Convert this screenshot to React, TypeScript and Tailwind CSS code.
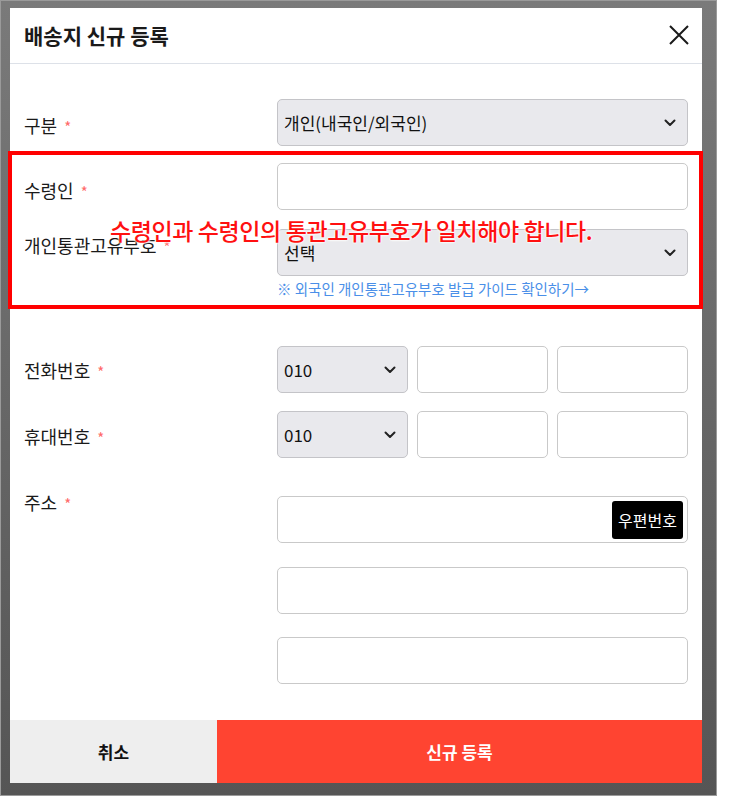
import React from "react";

const font = { fontFamily: '"Noto Sans CJK KR", "Noto Sans", sans-serif' };

function Star() {
  return <span className="ml-[7px] text-[15px] text-[#ff6a6a]">*</span>;
}

function Chevron() {
  return (
    <svg width="12" height="8" viewBox="0 0 12 8" className="shrink-0">
      <path d="M1.5 1.5 L6 6 L10.5 1.5" fill="none" stroke="#222" strokeWidth="2" strokeLinecap="round" strokeLinejoin="round" />
    </svg>
  );
}

function Select({ value, className = "" }: { value: string; className?: string }) {
  return (
    <div
      className={`flex h-[47px] items-center justify-between rounded-[5px] border border-[#c4c4c8] bg-[#e9e9ed] pl-[6px] pr-[11px] text-[17px] text-[#111] ${className}`}
    >
      <span>{value}</span>
      <Chevron />
    </div>
  );
}

function Input({ className = "", children }: { className?: string; children?: React.ReactNode }) {
  return (
    <div
      className={`flex h-[47px] items-center justify-end rounded-[5px] border border-[#c9c9c9] bg-white pr-[4px] ${className}`}
    >
      {children}
    </div>
  );
}

function Row({
  label,
  labelClass,
  mt,
  children,
}: {
  label: string;
  labelClass: string;
  mt: string;
  children: React.ReactNode;
}) {
  return (
    <div className={`flex items-start ${mt}`}>
      <div className={`w-[253px] text-[18px] leading-[24px] text-[#1a1a1a] ${labelClass}`}>
        {label}
        <Star />
      </div>
      <div className="w-[411px]">{children}</div>
    </div>
  );
}

export default function App() {
  return (
    <div className="min-h-[797px] w-[747px] bg-white" style={font}>
      <div className="h-[796px] w-[717px] border border-[#9a9a9a] bg-gradient-to-b from-[#7a7a7a] to-[#555] pb-[12px] pl-[9px] pr-[14px] pt-[7px]">
        <div className="relative flex h-[775px] w-[692px] flex-col bg-white">
          <div className="flex h-[56px] items-center justify-between border-b border-[#dde1e8] pl-[14px] pr-[12px]">
            <h2 className="text-[21px] font-semibold text-[#1a1a1a]">배송지 신규 등록</h2>
            <svg width="22" height="22" viewBox="0 0 22 22" className="mt-[-2px]">
              <path d="M2 2 L20 20 M20 2 L2 20" stroke="#1a1a1a" strokeWidth="2" />
            </svg>
          </div>

          <div className="flex-1 px-[14px] pt-[35px]">
            <Row label="구분" labelClass="mt-[14px]" mt="">
              <Select value="개인(내국인/외국인)" />
            </Row>
            <Row label="수령인" labelClass="mt-[15px]" mt="mt-[17px]">
              <Input />
            </Row>
            <Row label="개인통관고유부호" labelClass="mt-[4px]" mt="mt-[19px]">
              <Select value="선택" />
              <div className="mt-[3px] text-[14.5px] leading-[20px] text-[#4a8fe8]">
                ※ 외국인 개인통관고유부호 발급 가이드 확인하기→
              </div>
            </Row>
            <Row label="전화번호" labelClass="mt-[12px]" mt="mt-[47px]">
              <div className="flex gap-[9px]">
                <Select value="010" className="w-[131px]" />
                <Input className="w-[131px]" />
                <Input className="w-[131px]" />
              </div>
            </Row>
            <Row label="휴대번호" labelClass="mt-[13px]" mt="mt-[18px]">
              <div className="flex gap-[9px]">
                <Select value="010" className="w-[131px]" />
                <Input className="w-[131px]" />
                <Input className="w-[131px]" />
              </div>
            </Row>
            <Row label="주소" labelClass="-mt-[6px]" mt="mt-[38px]">
              <Input>
                <button className="h-[38px] rounded-[3px] bg-black px-[6px] text-[16px] text-white">우편번호</button>
              </Input>
              <Input className="mt-[24px]" />
              <Input className="mt-[23px]" />
            </Row>
          </div>

          <div className="flex h-[63px]">
            <button className="w-[207px] bg-[#eeeeee] text-[17px] font-bold text-[#111]">취소</button>
            <button className="flex-1 bg-[#ff4431] text-[17px] font-bold text-white">신규 등록</button>
          </div>

          <div className="pointer-events-none absolute left-[-2px] top-[143px] h-[158px] w-[695px] border-[4px] border-[#ff0000]" />
          <div
            className="pointer-events-none absolute left-[100px] top-[205px] text-[23px] font-medium tracking-[-0.4px] text-[#ff1010]"
            style={{ textShadow: "0 0 2px #fff, 0 0 2px #fff, 0 0 3px #fff" }}
          >
            수령인과 수령인의 통관고유부호가 일치해야 합니다.
          </div>
        </div>
      </div>
    </div>
  );
}
